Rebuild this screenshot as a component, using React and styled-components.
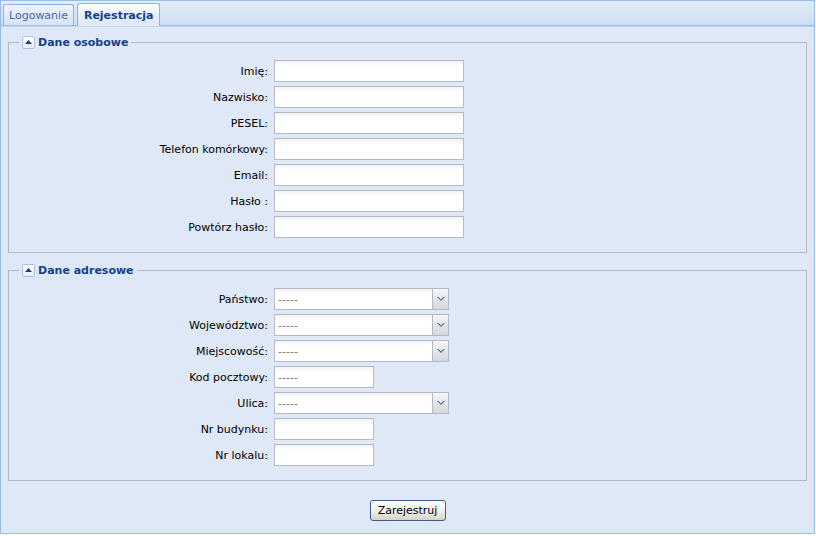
import React from 'react';
import styled, { createGlobalStyle } from 'styled-components';

const Global = createGlobalStyle`
  html, body { margin: 0; padding: 0; background: #ffffff; }
  body { font-family: "DejaVu Sans", Tahoma, sans-serif; font-size: 11px; }
`;

const Panel = styled.div`
  width: 815px;
  height: 534px;
  box-sizing: border-box;
  border: 1px solid #99bbe8;
  border-top: none;
  display: flex;
  flex-direction: column;
  background: #dfe8f6;
`;

const TabStrip = styled.div`
  height: 26px;
  box-sizing: border-box;
  display: flex;
  align-items: flex-end;
  gap: 3px;
  padding-left: 2px;
  background: linear-gradient(#e3ecf8, #cddef4);
  border-top: 1px solid #99bbe8;
  border-bottom: 1px solid #99bbe8;
`;

const Tab = styled.div`
  height: ${p => (p.$active ? '23px' : '21px')};
  margin-bottom: ${p => (p.$active ? '-1px' : '0')};
  box-sizing: border-box;
  padding: 0 ${p => (p.$active ? '6px' : '5px')};
  display: flex;
  align-items: center;
  border: 1px solid #8db2e3;
  border-bottom: none;
  border-radius: 3px 3px 0 0;
  background: ${p =>
    p.$active
      ? 'linear-gradient(#ffffff, #e4ecf8 60%, #dfe8f6)'
      : 'linear-gradient(#eef3fa, #d7e4f5)'};
  color: ${p => (p.$active ? '#15428b' : '#416aa3')};
  font-weight: ${p => (p.$active ? 'bold' : 'normal')};
  font-size: 11px;
`;

const Body = styled.div`
  flex: 1;
  padding: 8px 7px 0 7px;
  display: flex;
  flex-direction: column;
  border-top: 1px solid #c5d7ef;
`;

const Set = styled.fieldset`
  margin: 0 0 10px 0;
  padding: 11px 10px 14px 10px;
  border: 1px solid #b5b8c8;
  display: flex;
  flex-direction: column;
  gap: 4px;
`;

const Legend = styled.legend`
  padding: 0 3px;
  display: flex;
  align-items: center;
  gap: 3px;
  height: 14px;
  color: #15428b;
  font-weight: bold;
  font-size: 11px;
`;

const Toggle = styled.span`
  width: 13px;
  height: 13px;
  box-sizing: border-box;
  border: 1px solid #a9c1e3;
  border-radius: 2px;
  background: linear-gradient(#ffffff, #e6eef9);
  display: flex;
  align-items: center;
  justify-content: center;
`;

const Row = styled.div`
  display: flex;
  align-items: center;
  height: 22px;
`;

const Label = styled.label`
  width: 255px;
  box-sizing: border-box;
  padding-right: 6px;
  text-align: right;
  color: #000;
`;

const Input = styled.input`
  width: ${p => p.$w}px;
  height: 22px;
  box-sizing: border-box;
  margin: 0;
  padding: 0 3px;
  border: 1px solid #b5b8c8;
  background: linear-gradient(#f2f2f2, #ffffff 5px);
  font-family: inherit;
  font-size: 11px;
  color: #808080;
  outline: none;
`;

const Combo = styled.div`
  display: flex;
  width: 175px;
  height: 22px;
`;

const ComboInput = styled(Input)`
  flex: 1;
  border-right: none;
`;

const Trigger = styled.span`
  width: 17px;
  height: 22px;
  box-sizing: border-box;
  border: 1px solid #b5b8c8;
  background: linear-gradient(#f6f6f6, #d3d6dd);
  display: flex;
  align-items: center;
  justify-content: center;
`;

const Footer = styled.div`
  display: flex;
  justify-content: center;
  padding-top: 9px;
`;

const Button = styled.button`
  width: 76px;
  height: 21px;
  margin: 0;
  padding: 0;
  border: 1px solid #3f5e8e;
  border-radius: 3px;
  background: linear-gradient(#ffffff, #ecebe6 60%, #d6d2c2);
  font-family: inherit;
  font-size: 11px;
  color: #000;
`;

const Up = () => (
  <svg width="7" height="4" viewBox="0 0 7 4">
    <path d="M0 4 L3.5 0 L7 4 Z" fill="#15428b" />
  </svg>
);

const Down = () => (
  <svg width="8" height="5" viewBox="0 0 8 5">
    <path d="M0 0 L4 4 L8 0 L6.5 0 L4 2.5 L1.5 0 Z" fill="#4a6a97" />
  </svg>
);

const personal = ['Imię:', 'Nazwisko:', 'PESEL:', 'Telefon komórkowy:', 'Email:', 'Hasło :', 'Powtórz hasło:'];

const address = [
  { label: 'Państwo:', kind: 'combo' },
  { label: 'Województwo:', kind: 'combo' },
  { label: 'Miejscowość:', kind: 'combo' },
  { label: 'Kod pocztowy:', kind: 'short', value: '-----' },
  { label: 'Ulica:', kind: 'combo' },
  { label: 'Nr budynku:', kind: 'short' },
  { label: 'Nr lokalu:', kind: 'short' },
];

const App = () => {
  return (
    <Panel>
      <Global />
      <TabStrip>
        <Tab>Logowanie</Tab>
        <Tab $active>Rejestracja</Tab>
      </TabStrip>
      <Body>
        <Set>
          <Legend>
            <Toggle><Up /></Toggle>
            Dane osobowe
          </Legend>
          {personal.map(l => (
            <Row key={l}>
              <Label>{l}</Label>
              <Input $w={190} readOnly />
            </Row>
          ))}
        </Set>
        <Set>
          <Legend>
            <Toggle><Up /></Toggle>
            Dane adresowe
          </Legend>
          {address.map(f => (
            <Row key={f.label}>
              <Label>{f.label}</Label>
              {f.kind === 'combo' ? (
                <Combo>
                  <ComboInput readOnly value="-----" />
                  <Trigger><Down /></Trigger>
                </Combo>
              ) : (
                <Input $w={100} readOnly value={f.value || ''} />
              )}
            </Row>
          ))}
        </Set>
        <Footer>
          <Button>Zarejestruj</Button>
        </Footer>
      </Body>
    </Panel>
  );
};

export default App;
